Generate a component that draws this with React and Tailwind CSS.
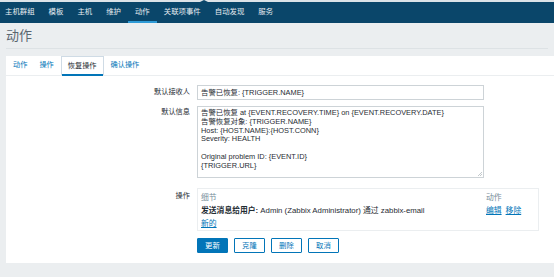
import React from 'react'

const font = { fontFamily: '"Liberation Sans", "Noto Sans CJK SC", sans-serif' }

const navItems = ['主机群组', '模板', '主机', '维护', '动作', '关联项事件', '自动发现', '服务']
const tabs = ['动作', '操作', '恢复操作', '确认操作']

const messageLines = [
    '告警已恢复 at {EVENT.RECOVERY.TIME} on {EVENT.RECOVERY.DATE}',
    '告警恢复对象: {TRIGGER.NAME}',
    'Host: {HOST.NAME}:{HOST.CONN}',
    'Severity: HEALTH',
    '\u00a0',
    'Original problem ID: {EVENT.ID}',
    '{TRIGGER.URL}',
]

const App = () => {
    return (
        <div className="w-[554px] h-[277px] overflow-hidden bg-[#ebeef0] text-[#1f2c33]" style={font}>
            {/* top strip of the main menu */}
            <div className="relative h-[2px] bg-[#dce3e8]">
                <div className="absolute left-[200px] top-0 w-0 h-0 border-l-[4px] border-r-[4px] border-b-[2px] border-l-transparent border-r-transparent border-b-[#0a466a]" />
            </div>

            {/* sub menu */}
            <div className="flex h-[21px] bg-[#0a466a]">
                {navItems.map((item) => (
                    <div
                        key={item}
                        className={`flex items-center px-[7px] first:pl-[5px] text-[7.4px] text-[#e6ecf0] border-b-2 ${item === '动作' ? 'border-[#2e9ad6]' : 'border-transparent'}`}
                    >
                        {item}
                    </div>
                ))}
            </div>

            {/* page header */}
            <div className="mx-[6px] h-[26px] flex items-center border-b border-[#dde2e5] text-[13px] text-[#5a6670]">
                动作
            </div>

            {/* card */}
            <div className="ml-[6px] mt-[7px] w-[560px] bg-white pb-[10px]">
                {/* tabs */}
                <div className="flex h-[20px] px-[1px] border-b border-[#ebeef0] text-[7.2px]">
                    {tabs.map((tab) => (
                        tab === '恢复操作' ? (
                            <div key={tab} className="flex items-center px-[6px] mx-[1px] border border-b-0 border-[#cfdbe5] text-[#1f2c33] relative">
                                {tab}
                                <div className="absolute left-0 right-0 bottom-[-1px] h-[2px] bg-[#0275b8]" />
                            </div>
                        ) : (
                            <div key={tab} className="flex items-center px-[6px] text-[#0275b8]">{tab}</div>
                        )
                    ))}
                </div>

                {/* form */}
                <div className="pt-[9px] flex flex-col gap-[6px] text-[7.2px]">
                    <div className="flex items-center">
                        <div className="w-[184px] text-right">默认接收人</div>
                        <div className="ml-[7px] w-[287px] h-[15px] border border-[#cdd3d7] flex items-center px-[3px] text-[7.4px]">
                            告警已恢复: {'{TRIGGER.NAME}'}
                        </div>
                    </div>

                    <div className="flex items-start">
                        <div className="w-[184px] text-right pt-[2px] leading-[8.8px]">默认信息</div>
                        <div className="relative ml-[7px] w-[287px] h-[72px] border border-[#cdd3d7] px-[3px] pt-[2px] leading-[8.8px] text-[7.4px]">
                            {messageLines.map((line, i) => (
                                <div key={i} className="whitespace-pre">{line}</div>
                            ))}
                            <svg className="absolute right-[1px] bottom-[1px]" width="5" height="5" viewBox="0 0 5 5">
                                <path d="M5 1L1 5M5 3L3 5" stroke="#9aa4aa" strokeWidth="0.6" />
                            </svg>
                        </div>
                    </div>

                    <div className="flex items-start mt-[4px]">
                        <div className="w-[184px] text-right pt-[3px]">操作</div>
                        <div className="ml-[7px] w-[342px] h-[43px] border border-[#ebeef0] px-[3px] pt-[3px] text-[7.8px]">
                            <div className="flex h-[12px] items-center text-[#768d99]">
                                <div className="flex-1">细节</div>
                                <div className="w-[49px]">动作</div>
                            </div>
                            <div className="flex h-[13px] items-center">
                                <div className="flex-1">
                                    <span className="font-bold">发送消息给用户:</span> Admin (Zabbix Administrator) 通过 zabbix-email
                                </div>
                                <div className="w-[49px] flex gap-[4px] text-[#0275b8]">
                                    <span className="underline">编辑</span>
                                    <span className="underline">移除</span>
                                </div>
                            </div>
                            <div className="flex h-[13px] items-center text-[#0275b8]">
                                <span className="underline">新的</span>
                            </div>
                        </div>
                    </div>

                    <div className="flex mt-[1px]">
                        <div className="w-[184px]" />
                        <div className="ml-[7px] flex gap-[6px]">
                            <button className="w-[31px] h-[15px] bg-[#0275b8] border border-[#0275b8] text-white text-[7.4px] rounded-[1px]">更新</button>
                            <button className="w-[31px] h-[15px] bg-white border border-[#0275b8] text-[#0275b8] text-[7.4px] rounded-[1px]">克隆</button>
                            <button className="w-[31px] h-[15px] bg-white border border-[#0275b8] text-[#0275b8] text-[7.4px] rounded-[1px]">删除</button>
                            <button className="w-[31px] h-[15px] bg-white border border-[#0275b8] text-[#0275b8] text-[7.4px] rounded-[1px]">取消</button>
                        </div>
                    </div>
                </div>
            </div>
        </div>
    )
}

export default App
